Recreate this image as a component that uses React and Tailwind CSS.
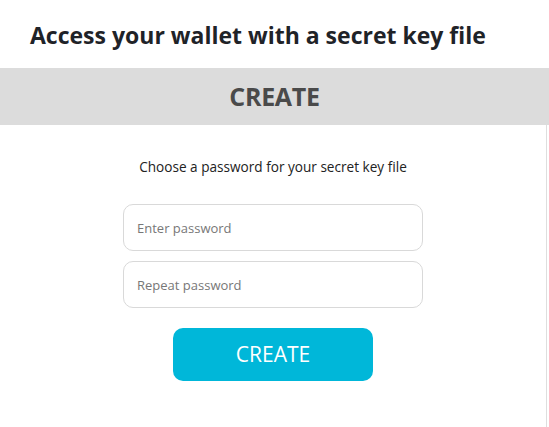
export default function App() {
  return (
    <div className="w-[549px] h-[427px] bg-white overflow-hidden" style={{ fontFamily: '"Open Sans", "Noto Sans", sans-serif' }}>
      {/* Header */}
      <div className="h-[68px] flex items-center pl-[30px]">
        <h1 className="text-[23px] font-bold text-[#1f2328] pt-[2px]">Access your wallet with a secret key file</h1>
      </div>

      {/* Tab band */}
      <div className="h-[57px] bg-[#dcdcdc] flex items-center justify-center">
        <span className="text-[25px] font-bold text-[#4a4a4a] tracking-[-0.3px]">CREATE</span>
      </div>

      {/* Body */}
      <div className="h-[302px] mr-[2px] border-r border-[#dedede] flex flex-col items-center pt-[32px]">
        <p className="text-[13.6px] leading-[20px] text-[#222] mb-[27px]" style={{ fontWeight: 500 }}>Choose a password for your secret key file</p>
        <input
          type="password"
          placeholder="Enter password"
          className="w-[300px] h-[47px] rounded-[10px] border border-[#d9d9d9] px-[13px] text-[13px] placeholder:text-[#777] outline-none"
        />
        <input
          type="password"
          placeholder="Repeat password"
          className="w-[300px] h-[47px] mt-[10px] rounded-[10px] border border-[#d9d9d9] px-[13px] text-[13px] placeholder:text-[#777] outline-none"
        />
        <button className="mt-[20px] w-[200px] h-[53px] rounded-[10px] bg-[#00b7d9] text-white text-[21px]">
          CREATE
        </button>
      </div>
    </div>
  );
}
